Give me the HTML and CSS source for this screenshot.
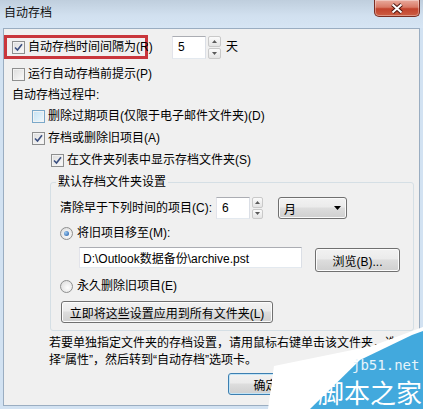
FILE: index.html
```html
<!DOCTYPE html>
<html lang="zh-CN">
<head>
<meta charset="utf-8">
<title>自动存档</title>
<link rel="stylesheet" href="styles.css">
</head>
<body>
<div class="window">
  <div class="titlebar">
    <span class="title">自动存档</span>
    <div class="close">
      <svg width="16" height="11" viewBox="0 0 16 11"><path d="M3.5 1.5 L12.5 9.5 M12.5 1.5 L3.5 9.5" stroke="#4d1710" stroke-width="4"/><path d="M3.5 1.5 L12.5 9.5 M12.5 1.5 L3.5 9.5" stroke="#fff" stroke-width="2"/></svg>
    </div>
  </div>
  <div class="client">
    <div class="row row-first">
      <div class="highlight">
        <span class="cb"><svg width="9" height="9" viewBox="0 0 9 9"><path d="M1 4.5 L3.5 7 L8 1.2" fill="none" stroke="#3b4f80" stroke-width="1.6"/></svg></span>
        <span class="lbl">自动存档时间间隔为(R)</span>
      </div>
      <div class="spinner first-spin">
        <div class="spin-input tall">5</div>
        <div class="spin-btns tall">
          <div class="spin-btn"><svg width="5" height="3" viewBox="0 0 5 3"><path d="M0 3 L2.5 0 L5 3Z" fill="#5a5a5a"/></svg></div>
          <div class="spin-btn"><svg width="5" height="3" viewBox="0 0 5 3"><path d="M0 0 L2.5 3 L5 0Z" fill="#5a5a5a"/></svg></div>
        </div>
      </div>
      <span class="unit">天</span>
    </div>

    <div class="row r2 ind1">
      <span class="cb"></span><span class="lbl">运行自动存档前提示(P)</span>
    </div>
    <div class="row r3 ind1">
      <span class="lbl">自动存档过程中:</span>
    </div>
    <div class="row ind2">
      <span class="cb hover"></span><span class="lbl">删除过期项目(仅限于电子邮件文件夹)(D)</span>
    </div>
    <div class="row ind2">
      <span class="cb"><svg width="9" height="9" viewBox="0 0 9 9"><path d="M1 4.5 L3.5 7 L8 1.2" fill="none" stroke="#3b4f80" stroke-width="1.6"/></svg></span><span class="lbl">存档或删除旧项目(A)</span>
    </div>
    <div class="row ind3">
      <span class="cb"><svg width="9" height="9" viewBox="0 0 9 9"><path d="M1 4.5 L3.5 7 L8 1.2" fill="none" stroke="#3b4f80" stroke-width="1.6"/></svg></span><span class="lbl">在文件夹列表中显示存档文件夹(S)</span>
    </div>

    <fieldset class="group">
      <legend>默认存档文件夹设置</legend>
      <div class="row">
        <span class="lbl clear-lbl">清除早于下列时间的项目(C):</span>
        <div class="spinner">
          <div class="spin-input">6</div>
          <div class="spin-btns">
            <div class="spin-btn"><svg width="5" height="3" viewBox="0 0 5 3"><path d="M0 3 L2.5 0 L5 3Z" fill="#5a5a5a"/></svg></div>
            <div class="spin-btn"><svg width="5" height="3" viewBox="0 0 5 3"><path d="M0 0 L2.5 3 L5 0Z" fill="#5a5a5a"/></svg></div>
          </div>
        </div>
        <div class="combo">
          <span>月</span>
          <svg width="7" height="4" viewBox="0 0 7 4"><path d="M0 0 L7 0 L3.5 4Z" fill="#000"/></svg>
        </div>
      </div>
      <div class="row gap3">
        <span class="rb on"><span class="dot"></span></span><span class="lbl">将旧项目移至(M):</span>
      </div>
      <div class="path-row">
        <div class="pathbox">D:\Outlook数据备份\archive.pst</div>
        <div class="btn browse">浏览(B)...</div>
      </div>
      <div class="row gap4">
        <span class="rb"></span><span class="lbl">永久删除旧项目(E)</span>
      </div>
      <div class="btn-row">
        <div class="btn apply">立即将这些设置应用到所有文件夹(L)</div>
      </div>
    </fieldset>

    <p class="note">若要单独指定文件夹的存档设置，请用鼠标右键单击该文件夹，选<br>择“属性”，然后转到“自动存档”选项卡。</p>

    <div class="btn ok">确定</div>
  </div>

  <svg class="watermark" width="155" height="82" viewBox="0 0 155 82">
    <polygon points="0,82 6,39 104,19 155,0 155,82" fill="#ffffff"/>
    <polygon points="42,82 92,33 144,8 155,4 155,82" fill="#42a9dd"/>
    <text x="84" y="43" class="wm-url">jb51.net</text>
    <text x="50" y="76" class="wm-name">脚本之家</text>
  </svg>
</div>
</body>
</html>
```

FILE: styles.css
```css
body {
  margin: 0;
  background: #ffffff;
  font-family: "Liberation Sans", "Noto Sans CJK SC", sans-serif;
  font-size: 12px;
  color: #000;
}

.window {
  position: relative;
  width: 423px;
  height: 409px;
  display: flex;
  flex-direction: column;
  background: #d2e2f2;
  overflow: hidden;
}

.titlebar {
  height: 28px;
  flex: none;
  display: flex;
  justify-content: space-between;
  align-items: flex-start;
  background: linear-gradient(#bfcedd, #d1e0ef 55%, #d6e5f4);
}

.title {
  margin: 5px 0 0 4px;
  line-height: 16px;
  font-size: 12px;
  color: #111;
}

.close {
  width: 46px;
  height: 17px;
  box-sizing: border-box;
  margin-right: 3px;
  border: 1px solid #7a2d22;
  border-top: none;
  border-radius: 0 0 5px 5px;
  background: linear-gradient(#e9aa9c, #d97a66 45%, #c2432d 55%, #cd5e43);
  box-shadow: inset 0 0 0 1px rgba(255, 255, 255, 0.35);
  display: flex;
  align-items: center;
  justify-content: center;
}

.client {
  flex: 1;
  margin: 0 3px 3px 3px;
  border: 1px solid #9aadc1;
  background: #f0f0f0;
  display: flex;
  flex-direction: column;
  min-height: 0;
}

.row {
  display: flex;
  align-items: center;
  height: 22px;
  flex: none;
}

.lbl {
  white-space: nowrap;
  line-height: 16px;
}

.row-first {
  margin-top: 6px;
  height: 24px;
}

.highlight {
  box-sizing: border-box;
  width: 144px;
  height: 24px;
  border: 3px solid #c9363c;
  padding-left: 5px;
  display: flex;
  align-items: center;
  flex: none;
}

.cb {
  width: 13px;
  height: 13px;
  box-sizing: border-box;
  border: 1px solid #8e8f8f;
  background: linear-gradient(135deg, #dcdcdc, #fbfbfb);
  box-shadow: inset 0 0 0 1px #f2f2f2;
  margin-right: 3px;
  flex: none;
  display: flex;
  align-items: center;
  justify-content: center;
}

.cb.hover {
  border-color: #7aa8c9;
  background: linear-gradient(135deg, #c4e2f4, #eef8fd);
}

.spinner {
  display: flex;
  align-items: center;
  flex: none;
}

.first-spin {
  margin-left: 24px;
}

.spin-input {
  box-sizing: border-box;
  width: 34px;
  height: 22px;
  border: 1px solid #abadb3;
  border-color: #abadb3 #dbdfe6 #e3e9ef #e2e3ea;
  background: #fff;
  padding-left: 5px;
  display: flex;
  align-items: center;
  font-size: 12px;
}

.spin-input.tall {
  height: 23px;
}

.spin-btns {
  margin-left: 2px;
  display: flex;
  flex-direction: column;
  gap: 1px;
  height: 22px;
}

.spin-btns.tall {
  height: 23px;
}

.spin-btn {
  flex: 1;
  width: 11px;
  box-sizing: border-box;
  border: 1px solid #c9c9c9;
  border-radius: 2px;
  background: linear-gradient(#fbfbfb, #e4e4e4);
  display: flex;
  align-items: center;
  justify-content: center;
}

.spin-btns.tall .spin-btn {
  width: 13px;
}

.unit {
  margin-left: 5px;
  line-height: 16px;
}

.r2 {
  margin-top: 4px;
}

.r3 {
  height: 20px;
}

.ind1 {
  padding-left: 8px;
}

.ind2 {
  padding-left: 28px;
}

.ind3 {
  padding-left: 47px;
}

.group {
  margin: 3px 5px 0 46px;
  padding: 7px 8px 7px 9px;
  border: 1px solid #d5dfe5;
  border-radius: 3px;
  min-width: 0;
  flex: none;
}

.group legend {
  padding: 0 2px;
  margin-left: -4px;
  line-height: 16px;
  font-size: 12px;
}

.clear-lbl {
  width: 156px;
  flex: none;
}

.combo {
  box-sizing: border-box;
  margin-left: 15px;
  width: 69px;
  height: 22px;
  border: 1px solid #707070;
  border-radius: 3px;
  background: linear-gradient(#f2f2f2 0%, #ebebeb 45%, #dddddd 50%, #cfcfcf 100%);
  box-shadow: inset 0 0 0 1px #fafafa;
  display: flex;
  align-items: center;
  justify-content: space-between;
  padding: 0 5px 0 5px;
}

.gap3 {
  margin-top: 3px;
}

.gap4 {
  margin-top: 3px;
}

.rb {
  width: 13px;
  height: 13px;
  box-sizing: border-box;
  border: 1px solid #8e8f8f;
  border-radius: 50%;
  background: radial-gradient(circle at 60% 60%, #fdfdfd, #d8d8d8);
  margin-right: 4px;
  flex: none;
  display: flex;
  align-items: center;
  justify-content: center;
}

.rb .dot {
  width: 5px;
  height: 5px;
  border-radius: 50%;
  background: radial-gradient(circle at 35% 35%, #9ccbf2, #1c55a3);
}

.path-row {
  display: flex;
  align-items: flex-start;
  margin-top: 3px;
  padding-left: 19px;
  height: 25px;
}

.pathbox {
  box-sizing: border-box;
  width: 223px;
  height: 21px;
  border: 1px solid #abadb3;
  border-color: #abadb3 #dbdfe6 #e3e9ef #e2e3ea;
  background: #fff;
  padding-left: 3px;
  display: flex;
  align-items: center;
  white-space: nowrap;
}

.btn {
  box-sizing: border-box;
  border: 1px solid #707070;
  border-radius: 3px;
  background: linear-gradient(#f2f2f2 0%, #ebebeb 45%, #dddddd 50%, #cfcfcf 100%);
  box-shadow: inset 0 0 0 1px #fcfcfc;
  display: flex;
  align-items: center;
  justify-content: center;
  white-space: nowrap;
  flex: none;
}

.browse {
  margin-left: 13px;
  margin-top: 1px;
  width: 85px;
  height: 24px;
}

.btn-row {
  display: flex;
  margin-top: 4px;
}

.apply {
  margin-left: 1px;
  width: 212px;
  height: 22px;
}

.note {
  margin: 4px 0 0 45px;
  line-height: 17px;
  white-space: nowrap;
}

.ok {
  margin: 4px 0 0 224px;
  width: 75px;
  height: 22px;
  border-color: #3c7fb1;
  box-shadow: inset 0 0 0 1px #c3e4f6;
}

.watermark {
  position: absolute;
  right: 0;
  bottom: 0;
}

.wm-url {
  font-family: "DejaVu Sans Mono", monospace;
  font-size: 14px;
  fill: #e6f4fb;
}

.wm-name {
  font-family: "Noto Sans CJK SC", sans-serif;
  font-size: 26px;
  fill: #ffffff;
}
```
